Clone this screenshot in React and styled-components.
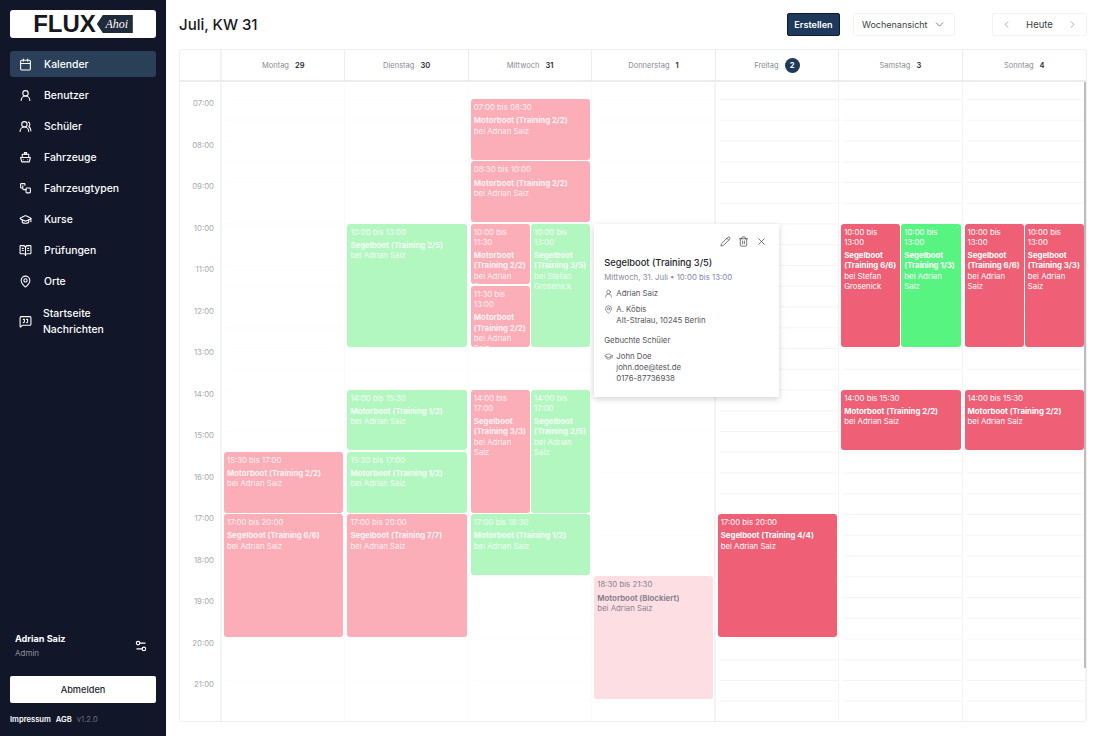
import styled, { createGlobalStyle } from "styled-components"
import {
  Calendar, UserRound, UsersRound, GraduationCap, BookOpenText, MapPin, MessageSquareQuote,
  Settings2, ChevronDown, ChevronLeft, ChevronRight, Pencil, Trash2, X,
} from "lucide-react"

const HOUR = 41.5
const FIRST_HOUR_TOP = 17

const ShipIcon = () => (
  <svg width="13" height="13" viewBox="0 0 24 24" fill="none" stroke="currentColor" strokeWidth="2" strokeLinecap="round" strokeLinejoin="round">
    <path d="M10 3h4v3h-4z" />
    <path d="M6 12V6h12v6" />
    <path d="M3 12h18l-2 8H5z" />
    <path d="M8 16h.01M16 16h.01" />
  </svg>
)

const TypesIcon = () => (
  <svg width="13" height="13" viewBox="0 0 24 24" fill="none" stroke="currentColor" strokeWidth="2" strokeLinecap="round" strokeLinejoin="round">
    <path d="M11 6V4a1 1 0 0 0-1-1H4a1 1 0 0 0-1 1v6a1 1 0 0 0 1 1h2" />
    <path d="M7 7v5a2 2 0 0 0 2 2h4" />
    <rect x="13" y="11" width="8" height="9" rx="1.5" />
  </svg>
)

const navItems = [
  { label: "Kalender", icon: <Calendar size={13} />, active: true },
  { label: "Benutzer", icon: <UserRound size={13} /> },
  { label: "Schüler", icon: <UsersRound size={13} /> },
  { label: "Fahrzeuge", icon: <ShipIcon /> },
  { label: "Fahrzeugtypen", icon: <TypesIcon /> },
  { label: "Kurse", icon: <GraduationCap size={13} /> },
  { label: "Prüfungen", icon: <BookOpenText size={13} /> },
  { label: "Orte", icon: <MapPin size={13} /> },
  { label: "Startseite Nachrichten", icon: <MessageSquareQuote size={13} />, tall: true },
]

const hours = ["07:00", "08:00", "09:00", "10:00", "11:00", "12:00", "13:00", "14:00", "15:00", "16:00", "17:00", "18:00", "19:00", "20:00", "21:00"]

const MB = (n) => `Motorboot (Training ${n})`
const SB = (n) => `Segelboot (Training ${n})`
const ADRIAN = "bei Adrian Saiz"
const STEFAN = "bei Stefan Grosenick"

const days = [
  {
    name: "Montag", date: "29", border: "soft",
    events: [
      { start: 15.5, end: 17, when: "15:30 bis 17:00", title: MB("2/2"), host: ADRIAN, tone: "pink" },
      { start: 17, end: 20, when: "17:00 bis 20:00", title: SB("6/6"), host: ADRIAN, tone: "pink" },
    ],
  },
  {
    name: "Dienstag", date: "30", border: "soft",
    events: [
      { start: 10, end: 13, when: "10:00 bis 13:00", title: SB("2/5"), host: ADRIAN, tone: "mint" },
      { start: 14, end: 15.5, when: "14:00 bis 15:30", title: MB("1/2"), host: ADRIAN, tone: "mint" },
      { start: 15.5, end: 17, when: "15:30 bis 17:00", title: MB("1/2"), host: ADRIAN, tone: "mint" },
      { start: 17, end: 20, when: "17:00 bis 20:00", title: SB("7/7"), host: ADRIAN, tone: "pink" },
    ],
  },
  {
    name: "Mittwoch", date: "31", border: "soft",
    events: [
      { start: 7, end: 8.5, when: "07:00 bis 08:30", title: MB("2/2"), host: ADRIAN, tone: "pink" },
      { start: 8.5, end: 10, when: "08:30 bis 10:00", title: MB("2/2"), host: ADRIAN, tone: "pink" },
      { start: 10, end: 11.5, lane: 0, when: "10:00 bis 11:30", title: MB("2/2"), host: ADRIAN, tone: "pink" },
      { start: 11.5, end: 13, lane: 0, when: "11:30 bis 13:00", title: MB("2/2"), host: ADRIAN, tone: "pink" },
      { start: 10, end: 13, lane: 1, when: "10:00 bis 13:00", title: SB("3/5"), host: STEFAN, tone: "mint" },
      { start: 14, end: 17, lane: 0, when: "14:00 bis 17:00", title: SB("3/3"), host: ADRIAN, tone: "pink" },
      { start: 14, end: 17, lane: 1, when: "14:00 bis 17:00", title: SB("2/5"), host: ADRIAN, tone: "mint" },
      { start: 17, end: 18.5, when: "17:00 bis 18:30", title: MB("1/2"), host: ADRIAN, tone: "mint" },
    ],
  },
  {
    name: "Donnerstag", date: "1", popover: true, border: "strong",
    events: [
      { start: 18.5, end: 21.5, when: "18:30 bis 21:30", title: "Motorboot (Blockiert)", host: ADRIAN, tone: "blocked" },
    ],
  },
  {
    name: "Freitag", date: "2", today: true, lined: true,
    events: [
      { start: 17, end: 20, when: "17:00 bis 20:00", title: SB("4/4"), host: ADRIAN, tone: "red" },
    ],
  },
  {
    name: "Samstag", date: "3", lined: true,
    events: [
      { start: 10, end: 13, lane: 0, when: "10:00 bis 13:00", title: SB("6/6"), host: STEFAN, tone: "red" },
      { start: 10, end: 13, lane: 1, when: "10:00 bis 13:00", title: SB("1/3"), host: ADRIAN, tone: "green" },
      { start: 14, end: 15.5, when: "14:00 bis 15:30", title: MB("2/2"), host: ADRIAN, tone: "red" },
    ],
  },
  {
    name: "Sonntag", date: "4", lined: true,
    events: [
      { start: 10, end: 13, lane: 0, when: "10:00 bis 13:00", title: SB("6/6"), host: ADRIAN, tone: "red" },
      { start: 10, end: 13, lane: 1, when: "10:00 bis 13:00", title: SB("3/3"), host: ADRIAN, tone: "red" },
      { start: 14, end: 15.5, when: "14:00 bis 15:30", title: MB("2/2"), host: ADRIAN, tone: "red" },
    ],
  },
]

const App = () => {
  return (
    <>
      <GlobalStyle />
      <Page>
        <Sidebar>
          <Logo>
            <LogoWord>FLUX</LogoWord>
            <LogoTag>Ahoi</LogoTag>
          </Logo>
          <NavList>
            {navItems.map((item) => (
              <NavItem key={item.label} $active={item.active} $tall={item.tall}>
                <NavIcon>{item.icon}</NavIcon>
                <NavLabel $tall={item.tall}>{item.label}</NavLabel>
              </NavItem>
            ))}
          </NavList>
          <UserRow>
            <div>
              <UserName>Adrian Saiz</UserName>
              <UserRole>Admin</UserRole>
            </div>
            <Settings2 size={14} color="#fff" />
          </UserRow>
          <LogoutButton>Abmelden</LogoutButton>
          <FooterLinks>
            <span>Impressum</span>
            <span>AGB</span>
            <Version>v1.2.0</Version>
          </FooterLinks>
        </Sidebar>

        <Main>
          <TopBar>
            <Title>Juli, KW 31</Title>
            <Actions>
              <PrimaryButton>Erstellen</PrimaryButton>
              <ViewSelect>
                Wochenansicht
                <ChevronDown size={13} strokeWidth={1.5} color="#666" />
              </ViewSelect>
              <WeekNav>
                <ChevronLeft size={11} strokeWidth={1.5} color="#888" />
                <span>Heute</span>
                <ChevronRight size={11} strokeWidth={1.5} color="#888" />
              </WeekNav>
            </Actions>
          </TopBar>

          <CalendarCard>
            <HeadRow>
              <HeadCorner />
              {days.map((day) => (
                <HeadCell key={day.name}>
                  {day.name}
                  {day.today ? <TodayBadge>{day.date}</TodayBadge> : <DateNum>{day.date}</DateNum>}
                </HeadCell>
              ))}
            </HeadRow>
            <Body>
              <TimeColumn>
                {hours.map((hour) => (
                  <TimeLabel key={hour}>{hour}</TimeLabel>
                ))}
              </TimeColumn>
              {days.map((day) => (
                <DayColumn key={day.name} $lined={day.lined} $border={day.border}>
                  {day.events.map((ev) => (
                    <EventCard key={ev.when + ev.title + ev.lane} $start={ev.start} $end={ev.end} $lane={ev.lane} $tone={ev.tone}>
                      <EventTime>{ev.when}</EventTime>
                      <EventTitle>{ev.title}</EventTitle>
                      <div>{ev.host}</div>
                    </EventCard>
                  ))}
                  {day.popover && (
                    <Popover>
                      <PopoverTools>
                        <Pencil size={11} strokeWidth={1.5} />
                        <Trash2 size={11} strokeWidth={1.5} />
                        <X size={11} strokeWidth={1.5} />
                      </PopoverTools>
                      <PopoverTitle>Segelboot (Training 3/5)</PopoverTitle>
                      <PopoverDate>Mittwoch, 31. Juli • <span>10:00 bis 13:00</span></PopoverDate>
                      <InfoRow>
                        <UserRound size={9} strokeWidth={1.6} />
                        <div>Adrian Saiz</div>
                      </InfoRow>
                      <InfoRow>
                        <MapPin size={9} strokeWidth={1.6} />
                        <div>A. Köbis<br />Alt-Stralau, 10245 Berlin</div>
                      </InfoRow>
                      <PopoverSection>Gebuchte Schüler</PopoverSection>
                      <InfoRow>
                        <GraduationCap size={9} strokeWidth={1.6} />
                        <div>John Doe<br />john.doe@test.de<br />0176-87736938</div>
                      </InfoRow>
                    </Popover>
                  )}
                </DayColumn>
              ))}
              <ScrollThumb />
            </Body>
          </CalendarCard>
        </Main>
      </Page>
    </>
  )
}
export default App

const GlobalStyle = createGlobalStyle`
  html, body {
    margin: 0;
    padding: 0;
    background: #fff;
  }
  body {
    font-family: 'Inter', 'Liberation Sans', sans-serif;
  }
  * {
    box-sizing: border-box;
  }
`

const Page = styled.div`
  display: flex;
  width: 1100px;
  height: 736px;
  overflow: hidden;
`

const Sidebar = styled.aside`
  width: 166px;
  flex: none;
  display: flex;
  flex-direction: column;
  padding: 10px 10px 0;
  background: #111629;
  color: #fff;
`

const Logo = styled.div`
  height: 28px;
  display: flex;
  align-items: center;
  justify-content: center;
  gap: 1px;
  background: #fff;
  border-radius: 3px;
  color: #16181d;
`

const LogoWord = styled.span`
  font-family: 'Liberation Sans', sans-serif;
  font-size: 24px;
  font-weight: 700;
  line-height: 28px;
`

const LogoTag = styled.span`
  width: 36px;
  height: 18px;
  display: flex;
  align-items: center;
  justify-content: center;
  padding-left: 4px;
  background: #1f2a3a;
  clip-path: polygon(6px 0, 100% 0, 100% 100%, 6px 100%, 0 50%);
  color: #fff;
  font-family: 'Liberation Serif', serif;
  font-size: 12px;
  font-style: italic;
`

const NavList = styled.nav`
  display: flex;
  flex-direction: column;
  gap: 5.1px;
  margin-top: 13px;
`

const NavItem = styled.a`
  min-height: ${(p) => (p.$tall ? "32px" : "26px")};
  margin-top: ${(p) => (p.$tall ? "5px" : "0")};
  display: flex;
  align-items: center;
  gap: 12px;
  padding-left: 9px;
  border-radius: 3px;
  background: ${(p) => (p.$active ? "#2a3f58" : "transparent")};
  font-size: 10.4px;
  font-weight: 500;
`

const NavIcon = styled.span`
  width: 13px;
  height: 13px;
  display: flex;
  flex: none;
`

const NavLabel = styled.span`
  max-width: ${(p) => (p.$tall ? "70px" : "none")};
  margin-left: ${(p) => (p.$tall ? "-1px" : "0")};
  padding-top: 1px;
  line-height: ${(p) => (p.$tall ? "16px" : "14px")};
`

const UserRow = styled.div`
  margin-top: auto;
  display: flex;
  align-items: center;
  justify-content: space-between;
  padding: 0 8px 0 5px;
`

const UserName = styled.div`
  font-size: 9.1px;
  font-weight: 700;
  line-height: 13px;
`

const UserRole = styled.div`
  margin-top: 2px;
  color: #8b8e9c;
  font-size: 8px;
  line-height: 12px;
`

const LogoutButton = styled.button`
  height: 27px;
  margin-top: 17px;
  border: 0;
  border-radius: 2px;
  background: #fff;
  color: #24262c;
  font-family: inherit;
  font-size: 9.2px;
  font-weight: 500;
`

const FooterLinks = styled.div`
  height: 33px;
  display: flex;
  align-items: center;
  gap: 5px;
  font-size: 7.6px;
  font-weight: 600;
`

const Version = styled.span`
  color: #6d7080;
  font-weight: 400;
`

const Main = styled.main`
  flex: 1;
  min-width: 0;
  display: flex;
  flex-direction: column;
  padding: 0 13px 14px;
`

const TopBar = styled.header`
  height: 49px;
  flex: none;
  display: flex;
  align-items: center;
  justify-content: space-between;
`

const Title = styled.h1`
  margin: 0;
  color: #17181c;
  font-size: 15px;
  font-weight: 500;
`

const Actions = styled.div`
  display: flex;
  align-items: center;
`

const PrimaryButton = styled.button`
  width: 53px;
  height: 23px;
  padding: 0;
  border: 1px solid #0f1a30;
  border-radius: 2px;
  background: #1d3a5c;
  color: #fff;
  font-family: inherit;
  font-size: 9.1px;
  font-weight: 600;
`

const ViewSelect = styled.div`
  width: 102px;
  height: 23px;
  margin-left: 13px;
  display: flex;
  align-items: center;
  justify-content: space-between;
  padding: 0 8px;
  border: 1px solid #f3f3f6;
  border-radius: 2px;
  color: #3c3d44;
  font-size: 9px;
`

const WeekNav = styled.div`
  width: 95px;
  height: 23px;
  margin-left: 37px;
  display: flex;
  align-items: center;
  justify-content: space-between;
  padding: 0 8px;
  border: 1px solid #f3f3f6;
  border-radius: 2px;
  color: #3c3d44;
  font-size: 9.5px;
`

const CalendarCard = styled.section`
  flex: 1;
  min-height: 0;
  display: flex;
  flex-direction: column;
  border: 1px solid #f0f0f3;
  border-radius: 3px;
`

const HeadRow = styled.div`
  height: 32px;
  flex: none;
  display: grid;
  grid-template-columns: 42px repeat(7, 1fr);
  border-bottom: 2px solid #ececf0;
`

const HeadCorner = styled.div`
  border-right: 2px solid #f1f1f5;
`

const HeadCell = styled.div`
  display: flex;
  align-items: center;
  justify-content: center;
  gap: 6px;
  padding-top: 1px;
  border-right: 1px solid #ededf1;
  color: #8a8b92;
  font-size: 7.5px;

  &:last-child {
    border-right: 0;
  }
`

const DateNum = styled.span`
  color: #2b2c33;
  font-weight: 600;
`

const TodayBadge = styled.span`
  width: 15px;
  height: 15px;
  display: flex;
  align-items: center;
  justify-content: center;
  border-radius: 50%;
  background: #1d3a5c;
  color: #fff;
  font-weight: 700;
`

const Body = styled.div`
  position: relative;
  flex: 1;
  min-height: 0;
  display: grid;
  grid-template-columns: 42px repeat(7, 1fr);
  overflow: hidden;
`

const TimeColumn = styled.div`
  padding-top: ${FIRST_HOUR_TOP}px;
  border-right: 2px solid #f4f3f8;
`

const TimeLabel = styled.div`
  height: ${HOUR}px;
  padding: 0 6px 0 0;
  color: #a8a9ae;
  font-size: 7.8px;
  line-height: 9px;
  text-align: right;
`

const columnBorders = {
  soft: "1px solid #fbfafc",
  strong: "2px solid #f4f3f8",
}

const DayColumn = styled.div`
  position: relative;
  border-right: ${(p) => columnBorders[p.$border] || "1px solid #f4f3f7"};

  &:last-of-type {
    border-right: 0;
  }

  &::before {
    content: "";
    position: absolute;
    inset: 0 0 0 4px;
    background: repeating-linear-gradient(
      to bottom,
      ${(p) => (p.$lined ? "#f4f3f7" : "#fdfcfe")} 0,
      ${(p) => (p.$lined ? "#f4f3f7" : "#fdfcfe")} 1px,
      transparent 1px,
      transparent ${HOUR / 2}px
    );
    background-position: 0 ${FIRST_HOUR_TOP}px;
    background-size: 100% ${HOUR / 2}px;
  }
`

const tones = {
  pink: { bg: "#fbadb8", fg: "rgba(255,255,255,0.88)" },
  mint: { bg: "#b2f7bf", fg: "rgba(255,255,255,0.88)" },
  red: { bg: "#ef5f76", fg: "#fff" },
  green: { bg: "#57f481", fg: "#fff" },
  blocked: { bg: "#fddfe3", fg: "#8a8290" },
}

const EventCard = styled.div`
  position: absolute;
  top: ${(p) => FIRST_HOUR_TOP + (p.$start - 7) * HOUR}px;
  height: ${(p) => (p.$end - p.$start) * HOUR - 1.5}px;
  left: ${(p) => (p.$lane === 1 ? "calc(50% + 1px)" : "2px")};
  ${(p) => (p.$lane === 0 ? "width: calc(50% - 2px);" : "right: 1px;")}
  padding: 3px 3px 0;
  overflow: hidden;
  border-radius: 3px;
  background: ${(p) => tones[p.$tone].bg};
  color: ${(p) => tones[p.$tone].fg};
  font-size: 7.8px;
  line-height: 10.3px;
`

const EventTime = styled.div`
  margin-bottom: 3px;
`

const EventTitle = styled.div`
  font-weight: 700;
`

const Popover = styled.div`
  position: absolute;
  z-index: 2;
  top: ${FIRST_HOUR_TOP + 3 * HOUR}px;
  left: 2px;
  width: 185px;
  height: 173px;
  padding: 12px 10px 0;
  background: #fff;
  box-shadow: 0 2px 6px rgba(30, 30, 60, 0.2);
  color: #55565e;
  font-size: 7.8px;
  line-height: 11px;
`

const PopoverTools = styled.div`
  display: flex;
  justify-content: flex-end;
  gap: 7px;
  height: 12px;
  padding-right: 2px;
  color: #3a3b42;
`

const PopoverTitle = styled.div`
  margin-top: 8px;
  color: #22232a;
  font-size: 9.3px;
  font-weight: 500;
  line-height: 13px;
`

const PopoverDate = styled.div`
  margin: 2px 0 4px;
  color: #8a8a9c;
  line-height: 13px;

  span {
    color: #8585ad;
  }
`

const InfoRow = styled.div`
  display: flex;
  gap: 3px;
  margin-bottom: 5px;

  svg {
    flex: none;
    margin-top: 1px;
  }
`

const PopoverSection = styled.div`
  margin: 9px 0 5px;
`

const ScrollThumb = styled.div`
  position: absolute;
  z-index: 3;
  top: 0;
  right: 0;
  width: 2px;
  height: 586px;
  background: #bcbcbf;
`
